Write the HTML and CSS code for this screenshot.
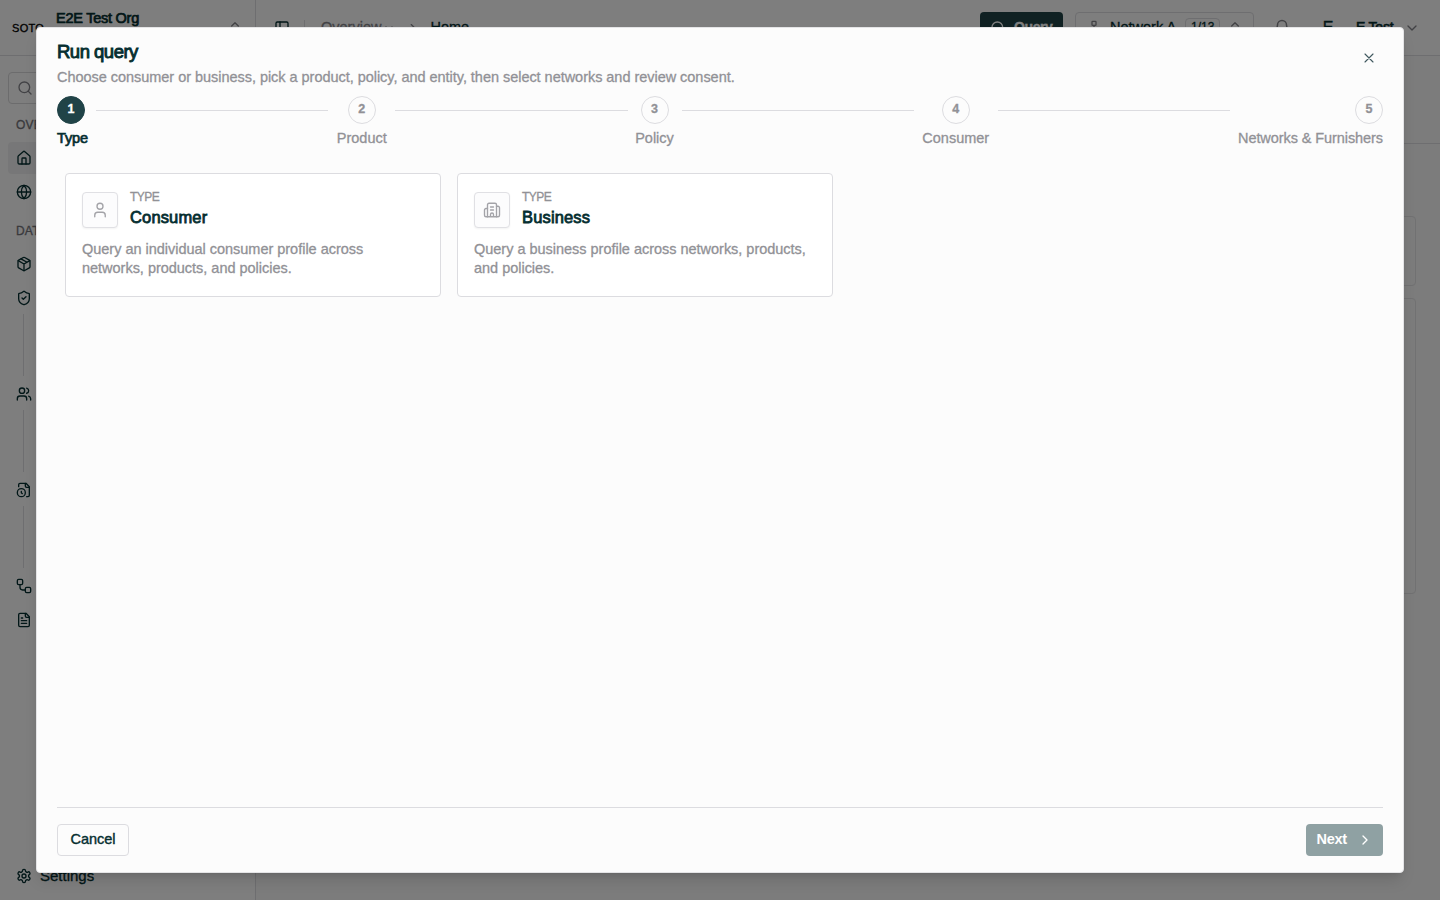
FILE: index.html
```html
<!DOCTYPE html>
<html lang="en">
<head>
<meta charset="utf-8">
<title>Run query</title>
<link rel="stylesheet" href="styles.css">
</head>
<body>
<div class="app">
  <aside class="sidebar">
    <div class="org">
      <span class="logo">SOTO</span>
      <span class="org-name">E2E Test Org</span>
      <svg class="icon i16 muted org-caret" viewBox="0 0 24 24"><path d="m7 15 5 5 5-5M7 9l5-5 5 5"/></svg>
    </div>
    <div class="side-body">
      <div class="search"><svg class="icon i16" viewBox="0 0 24 24"><circle cx="11" cy="11" r="8"/><path d="m21 21-4.3-4.3"/></svg></div>
      <div class="side-label">OVERVIEW</div>
      <div class="nav active"><svg class="icon i16" viewBox="0 0 24 24"><path d="M15 21v-8a1 1 0 0 0-1-1h-4a1 1 0 0 0-1 1v8"/><path d="M3 10a2 2 0 0 1 .709-1.528l7-6a2 2 0 0 1 2.582 0l7 6A2 2 0 0 1 21 10v9a2 2 0 0 1-2 2H5a2 2 0 0 1-2-2z"/></svg></div>
      <div class="nav"><svg class="icon i16" viewBox="0 0 24 24"><circle cx="12" cy="12" r="10"/><path d="M12 2a14.5 14.5 0 0 0 0 20 14.5 14.5 0 0 0 0-20M2 12h20"/></svg></div>
      <div class="side-label">DATA</div>
      <div class="nav"><svg class="icon i16" viewBox="0 0 24 24"><path d="M11 21.73a2 2 0 0 0 2 0l7-4A2 2 0 0 0 21 16V8a2 2 0 0 0-1-1.73l-7-4a2 2 0 0 0-2 0l-7 4A2 2 0 0 0 3 8v8a2 2 0 0 0 1 1.73z"/><path d="M12 22V12M3.3 7 12 12l8.7-5M7.5 4.27l9 5.15"/></svg></div>
      <div class="nav"><svg class="icon i16" viewBox="0 0 24 24"><path d="M20 13c0 5-3.5 7.5-7.66 8.95a1 1 0 0 1-.67-.01C7.5 20.5 4 18 4 13V6a1 1 0 0 1 1-1c2 0 4.5-1.2 6.24-2.72a1.17 1.17 0 0 1 1.52 0C14.51 3.81 17 5 19 5a1 1 0 0 1 1 1z"/><path d="m9 12 2 2 4-4"/></svg></div>
      <div class="branch"></div>
      <div class="nav"><svg class="icon i16" viewBox="0 0 24 24"><path d="M16 21v-2a4 4 0 0 0-4-4H6a4 4 0 0 0-4 4v2"/><circle cx="9" cy="7" r="4"/><path d="M22 21v-2a4 4 0 0 0-3-3.87M16 3.13a4 4 0 0 1 0 7.75"/></svg></div>
      <div class="branch"></div>
      <div class="nav"><svg class="icon i16" viewBox="0 0 24 24"><path d="M16 22h2a2 2 0 0 0 2-2V7l-5-5H6a2 2 0 0 0-2 2v3"/><path d="M14 2v4a2 2 0 0 0 2 2h4"/><circle cx="8" cy="16" r="6"/><path d="M9.5 17.5 8 16.25V14"/></svg></div>
      <div class="branch"></div>
      <div class="nav"><svg class="icon i16" viewBox="0 0 24 24"><rect width="8" height="8" x="2" y="2" rx="2"/><path d="M6 10v4a4 4 0 0 0 4 4h4"/><rect width="8" height="8" x="14" y="14" rx="2"/></svg></div>
      <div class="nav"><svg class="icon i16" viewBox="0 0 24 24"><path d="M15 2H6a2 2 0 0 0-2 2v16a2 2 0 0 0 2 2h12a2 2 0 0 0 2-2V7Z"/><path d="M14 2v4a2 2 0 0 0 2 2h4M10 9H8M16 13H8M16 17H8"/></svg></div>
      <div class="nav settings"><svg class="icon i16" viewBox="0 0 24 24"><path d="M12.22 2h-.44a2 2 0 0 0-2 2v.18a2 2 0 0 1-1 1.73l-.43.25a2 2 0 0 1-2 0l-.15-.08a2 2 0 0 0-2.73.73l-.22.38a2 2 0 0 0 .73 2.73l.15.1a2 2 0 0 1 1 1.72v.51a2 2 0 0 1-1 1.74l-.15.09a2 2 0 0 0-.73 2.73l.22.38a2 2 0 0 0 2.73.73l.15-.08a2 2 0 0 1 2 0l.43.25a2 2 0 0 1 1 1.73V20a2 2 0 0 0 2 2h.44a2 2 0 0 0 2-2v-.18a2 2 0 0 1 1-1.73l.43-.25a2 2 0 0 1 2 0l.15.08a2 2 0 0 0 2.73-.73l.22-.39a2 2 0 0 0-.73-2.73l-.15-.08a2 2 0 0 1-1-1.74v-.5a2 2 0 0 1 1-1.74l.15-.09a2 2 0 0 0 .73-2.73l-.22-.38a2 2 0 0 0-2.73-.73l-.15.08a2 2 0 0 1-2 0l-.43-.25a2 2 0 0 1-1-1.73V4a2 2 0 0 0-2-2z"/><circle cx="12" cy="12" r="3"/></svg><span>Settings</span></div>
    </div>
  </aside>
  <main class="main">
    <header class="topbar">
      <svg class="icon i16" viewBox="0 0 24 24"><rect width="18" height="18" x="3" y="3" rx="2"/><path d="M9 3v18"/></svg>
      <span class="divider"></span>
      <span class="crumb">Overview</span>
      <svg class="icon i12 muted crumb-caret" viewBox="0 0 24 24"><path d="m6 9 6 6 6-6"/></svg>
      <svg class="icon i14 muted crumb-sep" viewBox="0 0 24 24"><path d="m9 18 6-6-6-6"/></svg>
      <span class="crumb here">Home</span>
      <div class="top-right">
        <span class="query"><svg class="icon i16" viewBox="0 0 24 24"><circle cx="11" cy="11" r="8"/><path d="m21 21-4.3-4.3"/></svg><span class="lift">Query</span></span>
        <span class="network"><svg class="icon i16 muted" viewBox="0 0 24 24"><rect x="9" y="2" width="6" height="6" rx="1"/><path d="M12 8v4M5 16v-4h14v4"/><rect x="2" y="16" width="6" height="6" rx="1"/><rect x="16" y="16" width="6" height="6" rx="1"/></svg><span class="net-name lift">Network A</span><span class="count">1/13</span><svg class="icon i16 muted" viewBox="0 0 24 24"><path d="m7 15 5 5 5-5M7 9l5-5 5 5"/></svg></span>
        <svg class="icon i18 muted bell" viewBox="0 0 24 24"><path d="M10.268 21a2 2 0 0 0 3.464 0M3.262 15.326A1 1 0 0 0 4 17h16a1 1 0 0 0 .74-1.673C19.41 13.956 18 12.499 18 8A6 6 0 0 0 6 8c0 4.499-1.411 5.956-2.738 7.326"/></svg>
        <span class="avatar">E</span>
        <span class="user lift">E Test</span>
        <svg class="icon i16 muted" viewBox="0 0 24 24"><path d="m6 9 6 6 6-6"/></svg>
      </div>
    </header>
    <div class="page-head"></div>
    <div class="panels"><div class="panel small"></div><div class="panel large"></div></div>
  </main>
</div>
<div class="backdrop">
  <section class="dialog" role="dialog">
    <div class="head">
      <div>
        <h2 class="title">Run query</h2>
        <p class="subtitle">Choose consumer or business, pick a product, policy, and entity, then select networks and review consent.</p>
      </div>
      <svg class="icon i16 close" viewBox="0 0 24 24"><path d="M18 6 6 18M6 6l12 12"/></svg>
    </div>
    <div class="steps">
      <div class="step first"><span class="dot">1</span><span class="step-name">Type</span></div>
      <i class="line"></i>
      <div class="step product"><span class="dot">2</span><span class="step-name">Product</span></div>
      <i class="line"></i>
      <div class="step policy"><span class="dot">3</span><span class="step-name">Policy</span></div>
      <i class="line"></i>
      <div class="step consumer"><span class="dot">4</span><span class="step-name">Consumer</span></div>
      <i class="line"></i>
      <div class="step last"><span class="dot">5</span><span class="step-name">Networks &amp; Furnishers</span></div>
    </div>
    <div class="cards">
      <article class="card">
        <div class="card-top">
          <span class="tile"><svg class="icon i18" viewBox="0 0 24 24"><circle cx="12" cy="7" r="4"/><path d="M19 21v-2a4 4 0 0 0-4-4H9a4 4 0 0 0-4 4v2"/></svg></span>
          <div><div class="kind">TYPE</div><div class="name">Consumer</div></div>
        </div>
        <p class="desc">Query an individual consumer profile across<br>networks, products, and policies.</p>
      </article>
      <article class="card">
        <div class="card-top">
          <span class="tile"><svg class="icon i18" viewBox="0 0 24 24"><path d="M10 12h4M10 8h4M14 21v-3a2 2 0 0 0-4 0v3M6 10H4a2 2 0 0 0-2 2v7a2 2 0 0 0 2 2h16a2 2 0 0 0 2-2V9a2 2 0 0 0-2-2h-2"/><path d="M6 21V5a2 2 0 0 1 2-2h8a2 2 0 0 1 2 2v16"/></svg></span>
          <div><div class="kind">TYPE</div><div class="name">Business</div></div>
        </div>
        <p class="desc">Query a business profile across networks, products,<br>and policies.</p>
      </article>
    </div>
    <footer class="foot">
      <button class="btn cancel">Cancel</button>
      <button class="btn next">Next<svg class="icon i16" viewBox="0 0 24 24"><path d="m9 18 6-6-6-6"/></svg></button>
    </footer>
  </section>
</div>
</body>
</html>
```
FILE: styles.css
```css
* { box-sizing: border-box; }
body { margin: 0; height: 900px; overflow: hidden; font-family: "Liberation Sans", Arial, sans-serif; font-size: 14px; color: #052e30; background: #fafafa; -webkit-text-stroke: 0.3px currentColor; white-space: nowrap; }
h2, p { margin: 0; font-weight: 400; }
.icon { display: block; flex: none; fill: none; stroke: currentColor; stroke-width: 2; stroke-linecap: round; stroke-linejoin: round; }
.i12 { width: 12px; height: 12px; }
.i14 { width: 14px; height: 14px; }
.i16 { width: 16px; height: 16px; }
.i18 { width: 18px; height: 18px; }
.muted { color: #85858b; }
.lift { padding-bottom: 2px; }

.app { display: flex; height: 900px; }
.sidebar { width: 256px; flex: none; display: flex; flex-direction: column; border-right: 1px solid #dcdce0; background: #fcfcfc; }
.org { height: 56px; flex: none; display: flex; padding: 0 12px; border-bottom: 1px solid #dcdce0; }
.logo { width: 44px; padding-top: 21px; font-size: 11px; line-height: 14px; letter-spacing: 0.3px; color: #000; }
.org-name { padding-top: 10px; line-height: 17px; flex: 1; font-size: 14.5px; letter-spacing: -0.25px; -webkit-text-stroke-width: 0.7px; }
.org-caret { margin-top: 20px; }
.side-body { flex: 1; display: flex; flex-direction: column; padding: 16px 8px 8px; }
.search { height: 32px; display: flex; align-items: center; padding-left: 8px; border: 1px solid #d8d8da; border-radius: 4px; color: #85858b; }
.side-label { height: 16px; margin: 13px 0 9px 8px; font-size: 12px; line-height: 16px; color: #74747a; letter-spacing: 0.2px; }
.nav { height: 32px; flex: none; display: flex; align-items: center; gap: 8px; padding-left: 8px; margin-bottom: 2px; border-radius: 4px; }
.nav.active { background: #efeff0; }
.branch { height: 62px; flex: none; margin: -2px 0 2px 15px; border-left: 1px solid #dcdce0; }
.settings { margin: auto 0 0; font-size: 15px; }
.settings span { padding-bottom: 2px; }
.main { flex: 1; background: #f8f8f8; }
.topbar { height: 56px; display: flex; align-items: center; padding: 0 20px 0 18px; background: #fcfcfc; border-bottom: 1px solid #dcdce0; }
.divider { width: 1px; height: 16px; margin: 0 16px 0 14px; background: #dcdce0; }
.crumb { padding-bottom: 2px; color: #85858b; font-size: 14.5px; }
.crumb.here { color: #052e30; }
.crumb-caret { margin-left: 2px; }
.crumb-sep { margin: 0 10px 0 11px; }
.top-right { margin-left: auto; display: flex; align-items: center; }
.query { width: 83px; height: 32px; display: flex; align-items: center; gap: 8px; padding-left: 10px; border-radius: 4px; background: #204347; color: #fff; font-weight: 700; letter-spacing: -0.4px; }
.network { width: 179px; height: 32px; margin-left: 12px; display: flex; align-items: center; padding-left: 10px; border: 1px solid #dcdce0; border-radius: 4px; }
.net-name { width: 75px; margin-left: 8px; font-size: 14.5px; }
.count { height: 19px; margin-right: 7px; padding: 0 5px; border: 1px solid #dcdce0; border-radius: 4px; font-size: 12px; line-height: 17px; }
.bell { margin-left: 19px; }
.avatar { width: 32px; margin-left: 21px; text-align: center; font-size: 16px; line-height: 17px; }
.user { width: 38px; margin: 0 10px 0 12px; letter-spacing: -0.2px; -webkit-text-stroke-width: 0.6px; }
.page-head { height: 88px; border-bottom: 1px solid #dcdce0; }
.panels { display: grid; gap: 12px; padding: 72px 24px 0; }
.panel { border: 1px solid #e2e2e4; border-radius: 4px; }
.small { height: 70px; }
.large { height: 296px; }

.backdrop { position: absolute; inset: 0; display: grid; place-items: center; background: rgba(0, 0, 0, 0.5); }
.dialog { width: 1368px; height: 846px; display: flex; flex-direction: column; padding: 13px 20px 16px; border: 1px solid #e4e4e6; border-radius: 4px; background: #fcfcfc; box-shadow: 0 10px 15px -3px rgba(0, 0, 0, 0.12), 0 4px 6px -4px rgba(0, 0, 0, 0.12); }
.head { display: flex; justify-content: space-between; height: 55px; }
.title { font-size: 18.5px; line-height: 22px; letter-spacing: -0.5px; -webkit-text-stroke-width: 0.9px; }
.subtitle { margin-top: 5px; font-size: 14.5px; line-height: 18px; letter-spacing: -0.035px; color: #919196; }
.close { margin: 9px 6px 0 0; color: #40585f; stroke-width: 1.7; }
.steps { display: flex; gap: 8px; height: 54px; }
.step { display: flex; flex-direction: column; align-items: center; gap: 5px; color: #919196; }
.step.first { width: 31px; align-items: flex-start; color: #052e30; }
.step.product { width: 51px; }
.step.policy { width: 38px; }
.step.consumer { width: 68px; }
.step.last { width: 145px; align-items: flex-end; }
.dot { width: 28px; height: 28px; display: grid; place-items: center; border: 1px solid #dcdce0; border-radius: 50%; font-size: 12.5px; font-weight: 700; padding-bottom: 2px; }
.first .dot { background: #204347; border-color: #204347; color: #fff; }
.first .step-name { -webkit-text-stroke-width: 0.7px; letter-spacing: -0.1px; }
.step-name { font-size: 14.5px; line-height: 18px; }
.last .step-name { letter-spacing: -0.08px; }
.line { flex: 1; height: 1px; margin-top: 14px; background: #dcdce0; }
.cards { flex: 1; display: grid; grid-template-columns: 376px 376px; align-content: start; gap: 16px; padding: 23px 8px 0; }
.card { height: 124px; padding: 16px; border: 1px solid #dcdce0; border-radius: 4px; background: #fff; }
.card-top { display: flex; gap: 12px; }
.tile { width: 36px; height: 36px; margin-top: 2px; display: grid; place-items: center; border: 1px solid #e0e0e4; border-radius: 4px; background: #fcfcfd; color: #a3a3a8; box-shadow: 0 1px 2px rgba(0, 0, 0, 0.05); }
.tile .icon { stroke-width: 1.8; }
.kind { font-size: 12px; line-height: 14px; color: #919196; letter-spacing: -0.5px; }
.name { margin-top: 3px; font-size: 16.5px; line-height: 20px; letter-spacing: 0.15px; -webkit-text-stroke-width: 0.8px; }
.desc { margin-top: 12px; font-size: 14.5px; line-height: 19px; letter-spacing: -0.02px; color: #919196; }
.foot { display: flex; justify-content: space-between; border-top: 1px solid #dcdce0; padding-top: 16px; }
.btn { height: 32px; display: flex; align-items: center; padding: 0 0 2px; font: 14.5px "Liberation Sans", Arial, sans-serif; border-radius: 4px; -webkit-text-stroke: 0.4px currentColor; }
.cancel { width: 72px; justify-content: center; border: 1px solid #dcdce0; background: #fcfcfc; color: #052e30; }
.next { width: 77px; gap: 10px; padding-left: 10.5px; border: 0; background: #8fa1a3; color: #fff; font-weight: 700; letter-spacing: -0.3px; -webkit-text-stroke-width: 0; }
.next .icon { position: relative; top: 1px; }
```
